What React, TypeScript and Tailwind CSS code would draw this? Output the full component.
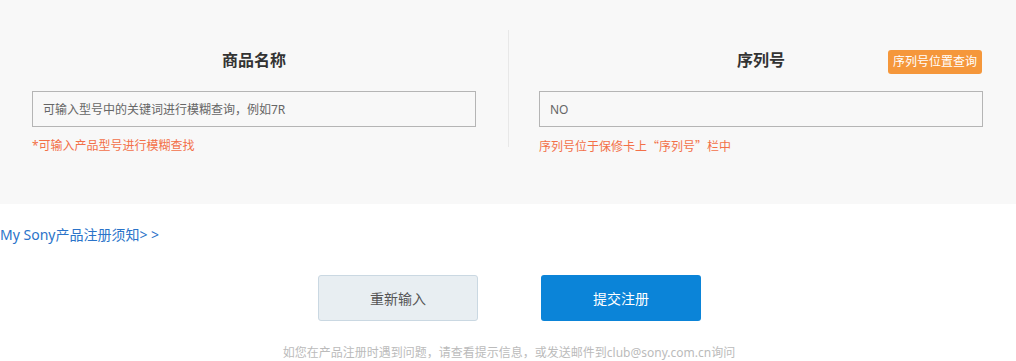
export default function App() {
  return (
    <div
      className="w-[1016px] h-[361px] bg-white overflow-hidden"
      style={{ fontFamily: '"Noto Sans", "Noto Sans CJK SC", sans-serif' }}
    >
      {/* Form panel */}
      <div className="h-[204px] bg-[#f8f8f8] pt-[30px] flex">
        <div className="w-[508px] h-[117px] pt-[18px] px-[32px]">
          <div className="h-[24px] leading-[24px] text-center text-[16px] font-bold text-[#333]">商品名称</div>
          <input
            className="mt-[19px] block w-[444px] h-[36px] border border-[#b5b5b5] bg-[#f8f8f8] px-[10px] text-[12px] text-[#666] placeholder:text-[#666] outline-none"
            placeholder="可输入型号中的关键词进行模糊查询，例如7R"
          />
          <div className="mt-[10px] text-[12px] leading-[18px] text-[#f37048]">*可输入产品型号进行模糊查找</div>
        </div>
        <div className="w-[508px] h-[117px] border-l border-[#e8e8e8] pt-[18px] pl-[30px]">
          <div className="relative w-[444px] h-[24px]">
            <div className="leading-[24px] text-center text-[16px] font-bold text-[#333]">序列号</div>
            <button className="absolute right-[1px] top-[2px] h-[24px] w-[94px] rounded-[3px] bg-[#f5973b] text-[12px] text-white leading-[24px]">
              序列号位置查询
            </button>
          </div>
          <input
            className="mt-[19px] block w-[444px] h-[36px] border border-[#b5b5b5] bg-[#f8f8f8] px-[10px] text-[12px] text-[#666] outline-none"
            defaultValue="NO"
          />
          <div
            className="mt-[10px] text-[12px] leading-[18px] text-[#f37048]"
            style={{ fontFamily: '"Noto Sans CJK SC", sans-serif' }}
          >
            序列号位于保修卡上“序列号”栏中
          </div>
        </div>
      </div>

      {/* Notice link */}
      <div className="mt-[21px] h-[20px] leading-[20px] text-[14px] text-[#2a73c9]">
        <a href="#">My Sony产品注册须知&gt;&nbsp;&gt;</a>
      </div>

      {/* Actions */}
      <div className="mt-[30px] flex justify-center gap-[63px] pl-[3px]">
        <button className="w-[160px] h-[46px] rounded-[3px] border border-[#cad8e2] bg-[#e8eef2] text-[14px] text-[#555]">
          重新输入
        </button>
        <button className="w-[160px] h-[46px] rounded-[3px] bg-[#0b84d8] text-[14px] text-white">
          提交注册
        </button>
      </div>

      <div className="mt-[23px] text-center text-[12px] leading-[18px] text-[#bbbbbb] pl-[2px]">
        如您在产品注册时遇到问题，请查看提示信息，或发送邮件到club@sony.com.cn询问
      </div>
    </div>
  );
}
